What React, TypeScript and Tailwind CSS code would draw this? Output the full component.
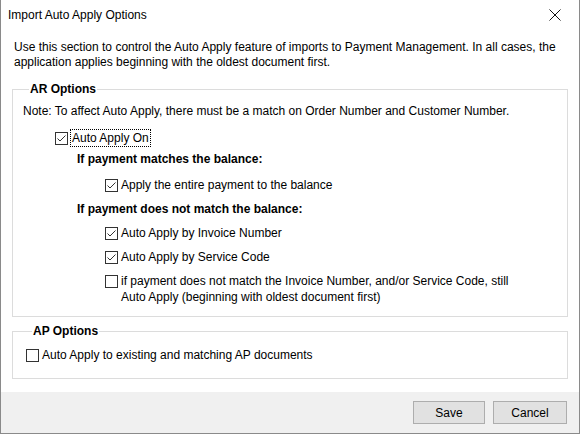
import React from "react";

// Win10-style checkbox: 13px square with a thin tick
function Check({ checked }: { checked?: boolean }) {
  return (
    <span className="flex h-[13px] w-[13px] flex-shrink-0 items-center justify-center border border-[#333333] bg-white">
      {checked && (
        <svg width="11" height="11" viewBox="0 0 11 11" fill="none">
          <path d="M1.5 5.5 L4 8 L9.5 2.5" stroke="#333333" strokeWidth="1" />
        </svg>
      )}
    </span>
  );
}

function Option({
  checked,
  children,
  focused,
  className = "",
}: {
  checked?: boolean;
  children: React.ReactNode;
  focused?: boolean;
  className?: string;
}) {
  return (
    <div className={`flex items-start ${className}`}>
      <span className="mt-[2px]">
        <Check checked={checked} />
      </span>
      {focused ? (
        <span className="ml-[3px] px-[1px] outline outline-1 outline-dotted outline-black leading-[16px]">
          {children}
        </span>
      ) : (
        <span className="ml-[3px] leading-[16px]">{children}</span>
      )}
    </div>
  );
}

export default function App() {
  return (
    <div
      className="flex h-[434px] w-[580px] flex-col border-x border-b border-[#8a8a8a] bg-white text-[12px] text-black"
      style={{ fontFamily: '"Liberation Sans", Arial, sans-serif' }}
    >
      {/* Title bar */}
      <div className="flex h-[30px] flex-shrink-0 items-center justify-between pl-[7px] pr-[18px]">
        <span className="text-[12px]">Import Auto Apply Options</span>
        <svg width="12" height="12" viewBox="0 0 12 12" fill="none">
          <path d="M0.5 0.5 L11.5 11.5 M11.5 0.5 L0.5 11.5" stroke="#111" strokeWidth="1" />
        </svg>
      </div>

      {/* Description */}
      <p className="mt-[10px] w-[562px] pl-[13px] leading-[15px]">
        Use this section to control the Auto Apply feature of imports to Payment Management. In all cases, the
        application applies beginning with the oldest document first.
      </p>

      {/* AR Options */}
      <fieldset className="mx-[11px] mt-[12px] border border-[#dcdcdc] pb-[11px] pl-[10px]">
        <legend className="ml-[6px] px-[1px] font-bold leading-[14px]">AR Options</legend>
        <div className="mt-[7px] flex h-[16px] items-center">
          Note: To affect Auto Apply, there must be a match on Order Number and Customer Number.
        </div>
        <Option checked focused className="ml-[32px] mt-[11px] h-[16px]">
          Auto Apply On
        </Option>
        <div className="ml-[54px] mt-[5px] flex h-[16px] items-center font-bold">
          If payment matches the balance:
        </div>
        <Option checked className="ml-[82px] mt-[10px]">
          Apply the entire payment to the balance
        </Option>
        <div className="ml-[54px] mt-[8px] flex h-[16px] items-center font-bold">
          If payment does not match the balance:
        </div>
        <Option checked className="ml-[82px] mt-[8px]">
          Auto Apply by Invoice Number
        </Option>
        <Option checked className="ml-[82px] mt-[8px]">
          Auto Apply by Service Code
        </Option>
        <Option className="ml-[82px] mt-[8px] w-[420px]">
          if payment does not match the Invoice Number, and/or Service Code, still Auto Apply (beginning with
          oldest document first)
        </Option>
      </fieldset>

      {/* AP Options */}
      <fieldset className="mx-[11px] mt-[7px] border border-[#dcdcdc] pb-[15px] pl-[13px]">
        <legend className="ml-[6px] px-[1px] font-bold leading-[14px]">AP Options</legend>
        <Option className="mt-[9px]">Auto Apply to existing and matching AP documents</Option>
      </fieldset>

      {/* Footer */}
      <div className="mt-auto flex h-[41px] flex-shrink-0 items-start justify-end gap-[8px] bg-[#f0f0f0] pr-[12px] pt-[9px]">
        <button className="h-[23px] w-[72px] border border-[#adadad] bg-[#e1e1e1]">Save</button>
        <button className="h-[23px] w-[74px] border border-[#adadad] bg-[#e1e1e1]">Cancel</button>
      </div>
    </div>
  );
}
